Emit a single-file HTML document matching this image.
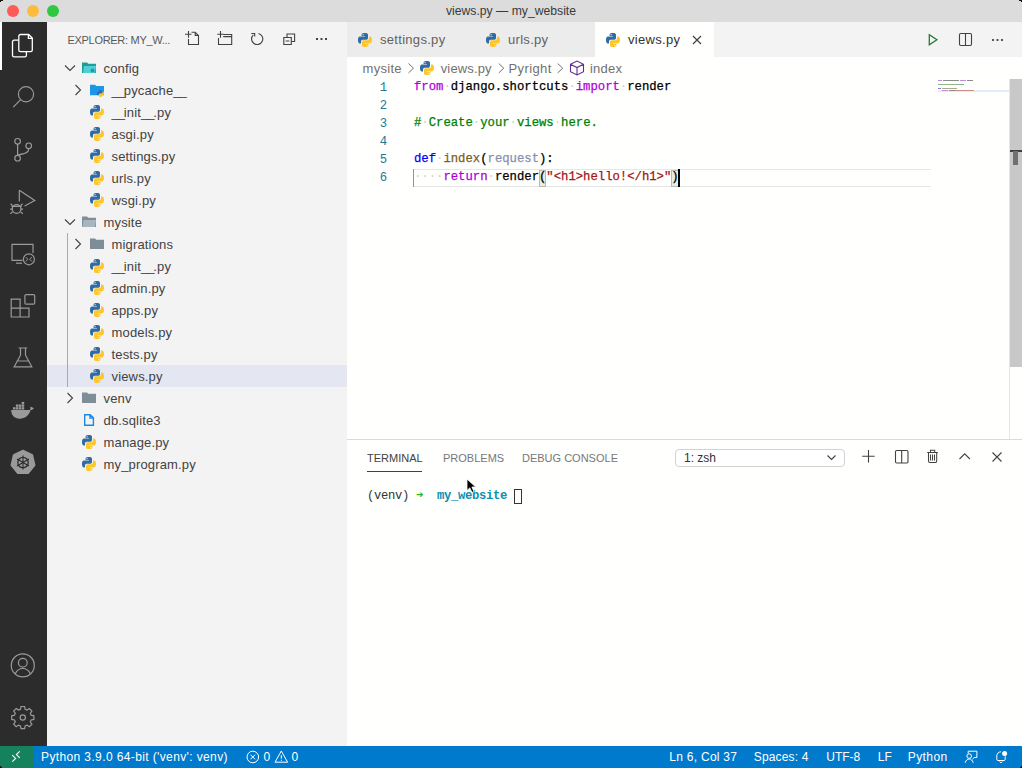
<!DOCTYPE html>
<html><head><meta charset="utf-8">
<style>
*{margin:0;padding:0;box-sizing:border-box}
html,body{width:1022px;height:768px;overflow:hidden;background:#fff;font-family:"Liberation Sans",sans-serif;}
.abs{position:absolute}
svg{position:absolute;overflow:visible}
#title{left:0;top:0;width:1022px;height:22px;background:#dcdcdc;}
#title .t{position:absolute;left:0;width:1022px;top:3px;text-align:center;font-size:12.2px;color:#3a3a3a;line-height:16px}
.dot{position:absolute;top:5px;width:12px;height:12px;border-radius:50%}
#act{left:0;top:22px;width:47px;height:724px;background:#2c2c2c}
#side{left:47px;top:22px;width:300px;height:724px;background:#f3f3f3}
#side .hdr{position:absolute;left:20.5px;top:12px;font-size:11px;line-height:13px;color:#5a5a5a;letter-spacing:-0.3px}
#editor{left:347px;top:22px;width:675px;height:417px;background:#fffffe}
#tabs{left:0;top:0;width:675px;height:35px;background:#f3f3f3}
.tab{position:absolute;top:0;height:35px;background:#ececec;font-size:13px;color:#626262}
.tab.active{background:#fffffe;color:#333}
.tab span{position:absolute;top:10px;line-height:16px;letter-spacing:0.3px}
#panel{left:347px;top:439px;width:675px;height:307px;background:#fffffe;border-top:1px solid #dadada}
#status{left:0;top:746px;width:1022px;height:22px;background:#007acc;color:#fff;font-size:12px}
#status span{position:absolute;top:3px;line-height:16px}
.row{position:absolute;left:0;width:300px;height:22px;font-size:13px;color:#424242}
.row.sel{background:#e4e6f1}
.row .n{position:absolute;top:4px;line-height:16px;letter-spacing:0.16px}
.u{letter-spacing:-1.1px}
.code{position:absolute;left:67px;font-family:"Liberation Mono",monospace;font-size:12.25px;line-height:18px;height:18px;white-space:pre;color:#000;-webkit-text-stroke:0.25px}
.ln{position:absolute;left:0;width:40px;font-family:"Liberation Mono",monospace;font-size:12.25px;line-height:18px;color:#237893;text-align:right}
.bc{position:absolute;top:3px;line-height:16px;font-size:13px;color:#717171}
.ws{color:#cfcfcf;-webkit-text-stroke:0}
.kw{color:#af00db}.dfn{color:#0000ff}.cm{color:#008000}.st{color:#a31515}.fn{color:#795e26}.pr{color:#8a8fb0}
.ptab{position:absolute;top:12px;font-size:11px;line-height:13px;color:#777}
.term{position:absolute;font-family:"Liberation Mono",monospace;font-size:12.2px;letter-spacing:-0.32px;line-height:16px;white-space:pre;color:#333}
</style></head><body>
<svg width="0" height="0" style="position:absolute">
<defs>
 <symbol id="py" viewBox="0 0 16 16">
  <path fill="#2f6ca6" d="M7.9 1C4.4 1 4.6 2.5 4.6 2.5v1.6H8v.5H3.2S1 4.3 1 7.9s1.9 3.5 1.9 3.5H4V9.7s-.1-1.9 1.9-1.9h3.3s1.8 0 1.8-1.8V2.8S11.3 1 7.9 1zM6.1 2.1a.6.6 0 1 1 0 1.2.6.6 0 0 1 0-1.2z"/>
  <path fill="#fcc62c" d="M8.1 15c3.5 0 3.3-1.5 3.3-1.5v-1.6H8v-.5h4.8s2.2.3 2.2-3.3-1.9-3.5-1.9-3.5H12v1.7s.1 1.9-1.9 1.9H6.8S5 8.2 5 10v3.2S4.7 15 8.1 15zm1.8-1.1a.6.6 0 1 1 0-1.2.6.6 0 0 1 0 1.2z"/>
 </symbol>
 <symbol id="i-py" viewBox="0 0 16 16"><use href="#py"/></symbol>
 <symbol id="chd" viewBox="0 0 16 16"><path d="M3 5.5l5 5 5-5" fill="none" stroke="#424242" stroke-width="1.1"/></symbol>
 <symbol id="chr" viewBox="0 0 16 16"><path d="M5.5 3l5 5-5 5" fill="none" stroke="#424242" stroke-width="1.1"/></symbol>
 <symbol id="i-cfgopen" viewBox="0 0 16 16">
  <path fill="#1f9e98" d="M1 2.5h5l1.3 1.3H15V13H1z"/>
  <path fill="#4fd0d6" d="M3 6h12l-1 7H2z"/>
  <circle cx="11.5" cy="10.5" r="2" fill="#1f9e98"/>
 </symbol>
 <symbol id="i-pycache" viewBox="0 0 16 16">
  <path fill="#1e96e8" d="M1 2.7h5l1.3 1.3H15v9.2H1z"/>
  <g transform="translate(7.5 7.5) scale(.5)"><use href="#py" width="16" height="16"/></g>
 </symbol>
 <symbol id="i-open" viewBox="0 0 16 16">
  <path fill="#7d8e98" d="M1 2.5h5l1.3 1.3H15V13H1z"/>
  <path fill="#a7b6be" d="M2.5 6h12.5l-1 7H1.5z"/>
 </symbol>
 <symbol id="i-closed" viewBox="0 0 16 16">
  <path fill="#7d8e98" d="M1 2.5h5l1.3 1.3H15V13H1z"/>
 </symbol>
 <symbol id="i-file" viewBox="0 0 16 16">
  <path fill="none" stroke="#1e88e5" stroke-width="1.4" d="M3.7 2.7h5.5l3.2 3.2v7.4H3.7z M9 2.7v3.4h3.4"/>
 </symbol>
</defs>
</svg>
<!-- TITLE BAR -->
<div id="title" class="abs">
  <div class="dot" style="left:7px;background:#fd5b56"></div>
  <div class="dot" style="left:27px;background:#fdbb3e"></div>
  <div class="dot" style="left:47px;background:#2ec842"></div>
  <div class="t">views.py — my_website</div>
</div>
<!-- ACTIVITY BAR -->
<div id="act" class="abs">
  <div class="abs" style="left:0;top:0;width:1.5px;height:48px;background:#fff"></div>
  <svg style="left:0;top:0" width="47" height="724" fill="none" stroke="#9a9a9a" stroke-width="1.2">
    <!-- explorer -->
    <g stroke="#fff" stroke-width="1.3">
      <path d="M18.5 18.2h-4.4a1.6 1.6 0 0 0-1.6 1.6v13.4a1.6 1.6 0 0 0 1.6 1.6h10.7a1.6 1.6 0 0 0 1.6-1.6v-4"/>
      <path d="M20.5 12.5h8.2l3.6 3.6v11.8a1.7 1.7 0 0 1-1.7 1.7h-10.1a1.7 1.7 0 0 1-1.7-1.7V14.2a1.7 1.7 0 0 1 1.7-1.7z M28.4 12.7v3.6h3.6"/>
    </g>
    <!-- search -->
    <circle cx="26" cy="72.3" r="7.6"/>
    <path d="M20.6 77.7l-7.3 7.5"/>
    <!-- scm -->
    <circle cx="17.6" cy="119.3" r="2.8"/>
    <circle cx="17.6" cy="136.2" r="2.8"/>
    <circle cx="28.7" cy="123.8" r="2.8"/>
    <path d="M17.6 122.1v11.3 M28.7 126.6c0 3.5-2 4.7-5.5 5.2-3 .4-5.2 1.2-5.6 1.6"/>
    <!-- debug -->
    <path d="M19.3 168.2v11.3 M19.3 168.2L34.8 178.4 24.6 184.1"/>
    <circle cx="16.6" cy="187" r="4.3"/>
    <path d="M11.5 184.4h10.2 M12.6 183.6l-2-1.8 M20.6 183.6l2-1.8 M12.4 190l-2 1.8 M20.8 190l2 1.8 M12.3 187.2h-2.2 M20.9 187.2h2.2"/>
    <!-- remote -->
    <path d="M22.5 238.3h-10.5v-15.9h21v8.6"/>
    <path d="M16 241.2h6"/>
    <circle cx="28.9" cy="237.3" r="5.5"/>
    <path d="M25.8 235.2l2 2.1-2 2.1 M31.8 235.2l-2 2.1 2 2.1" stroke-width="1"/>
    <!-- extensions -->
    <path d="M11.2 277.2h8.9v8.9h8.9V295H11.2z M11.2 286.1h8.9V295"/>
    <rect x="24.9" y="272.6" width="9.8" height="9.6" rx="1.2"/>
    <!-- testing -->
    <path d="M18.6 326h8.7 M20.5 326v7.2l-6.3 11.6h17.6l-6.3-11.6V326 M16.6 339h12.8"/>
    <!-- docker -->
    <g fill="#9a9a9a" stroke="none">
      <path d="M11.2 388h18.9c.4-1 .5-2.2.3-3.3 1.2.2 2.4.9 3.5 1.7-.8.9-1.9 1.5-3.3 1.6-1.6 5.5-5.8 8.7-10.8 8.7-5.4 0-8.6-3.5-8.6-8.7z"/>
      <rect x="13" y="385.2" width="2.5" height="2.3"/><rect x="15.9" y="385.2" width="2.5" height="2.3"/><rect x="18.8" y="385.2" width="2.5" height="2.3"/><rect x="21.7" y="385.2" width="2.5" height="2.3"/>
      <rect x="15.9" y="382.5" width="2.5" height="2.3"/><rect x="18.8" y="382.5" width="2.5" height="2.3"/><rect x="21.7" y="382.5" width="2.5" height="2.3"/>
      <rect x="21.7" y="379.9" width="2.5" height="2.3"/>
    </g>
    <!-- kubernetes -->
    <path fill="#9a9a9a" stroke="#9a9a9a" stroke-width="1.5" stroke-linejoin="round" d="M23.0 428.5 L32.4 433.0 L34.7 443.2 L28.2 451.3 L17.8 451.3 L11.3 443.2 L13.6 433.0z"/>
    <circle cx="23" cy="440.5" r="5.2" stroke="#2c2c2c" stroke-width="1.3"/>
    <path d="M23 433.5v14 M17 437l12 7 M29 437l-12 7" stroke="#2c2c2c" stroke-width="1.1"/>
    <!-- account -->
    <circle cx="22.8" cy="643.4" r="11.5"/>
    <circle cx="22.8" cy="640.8" r="4.4"/>
    <path d="M15.3 651.7c1.5-3.3 4.2-5.2 7.5-5.2s6 1.9 7.5 5.2"/>
    <!-- gear -->
    <circle cx="22.8" cy="695.5" r="2.6"/>
    <path d="M21 684.5h3.6l.6 2.8 1.8.8 2.4-1.6 2.5 2.5-1.6 2.4.8 1.8 2.8.6v3.6l-2.8.6-.8 1.8 1.6 2.4-2.5 2.5-2.4-1.6-1.8.8-.6 2.8H21l-.6-2.8-1.8-.8-2.4 1.6-2.5-2.5 1.6-2.4-.8-1.8-2.8-.6v-3.6l2.8-.6.8-1.8-1.6-2.4 2.5-2.5 2.4 1.6 1.8-.8z"/>
  </svg>
</div>
<!-- SIDEBAR -->
<div id="side" class="abs">
  <div class="hdr">EXPLORER: MY_W...</div>
  <svg style="left:0;top:0" width="300" height="35" fill="none" stroke="#424242" stroke-width="1.1">
    <!-- new file -->
    <path d="M141.5 17v5.5h10v-9.1l-3.3-3.2h-3.7 M148.2 10.2v3.2h3.3 M138 12.2h6.5 M141.5 9v6.7"/>
    <!-- new folder -->
    <path d="M171.5 16v6.5h13.2v-10h-8 M176.2 14.6h8.5 M170.3 12.2h6.4 M173.5 9v6.7"/>
    <!-- refresh -->
    <path d="M211.5 11.5A5.6 5.6 0 1 1 206.3 12.9 M204.3 11.5h3.4v3"/>
    <!-- collapse -->
    <path d="M236.8 15.5h7.5v7H236.8z M240 15.5v-3.5h7.6v7.5h-3.3 M238.6 19h3.8"/>
  </svg>
  <div class="abs" style="left:268.5px;top:16px;width:2px;height:2px;background:#424242;box-shadow:4.5px 0 #424242,9px 0 #424242"></div>
<div class="row" style="top:35px"><svg style="left:15px;top:3px" width="16" height="16"><use href="#chd"/></svg><svg style="left:34px;top:3px" width="16" height="16"><use href="#i-cfgopen"/></svg><span class="n" style="left:56.5px">config</span></div>
<div class="row" style="top:57px"><svg style="left:23px;top:3px" width="16" height="16"><use href="#chr"/></svg><svg style="left:42px;top:3px" width="16" height="16"><use href="#i-pycache"/></svg><span class="n" style="left:64.5px"><span class="u">__</span>pycache<span class="u">__</span></span></div>
<div class="row" style="top:79px"><svg style="left:42px;top:3px" width="16" height="16"><use href="#i-py"/></svg><span class="n" style="left:64.5px"><span class="u">__</span>init<span class="u">__</span>.py</span></div>
<div class="row" style="top:101px"><svg style="left:42px;top:3px" width="16" height="16"><use href="#i-py"/></svg><span class="n" style="left:64.5px">asgi.py</span></div>
<div class="row" style="top:123px"><svg style="left:42px;top:3px" width="16" height="16"><use href="#i-py"/></svg><span class="n" style="left:64.5px">settings.py</span></div>
<div class="row" style="top:145px"><svg style="left:42px;top:3px" width="16" height="16"><use href="#i-py"/></svg><span class="n" style="left:64.5px">urls.py</span></div>
<div class="row" style="top:167px"><svg style="left:42px;top:3px" width="16" height="16"><use href="#i-py"/></svg><span class="n" style="left:64.5px">wsgi.py</span></div>
<div class="row" style="top:189px"><svg style="left:15px;top:3px" width="16" height="16"><use href="#chd"/></svg><svg style="left:34px;top:3px" width="16" height="16"><use href="#i-open"/></svg><span class="n" style="left:56.5px">mysite</span></div>
<div class="row" style="top:211px"><svg style="left:23px;top:3px" width="16" height="16"><use href="#chr"/></svg><svg style="left:42px;top:3px" width="16" height="16"><use href="#i-closed"/></svg><span class="n" style="left:64.5px">migrations</span></div>
<div class="row" style="top:233px"><svg style="left:42px;top:3px" width="16" height="16"><use href="#i-py"/></svg><span class="n" style="left:64.5px"><span class="u">__</span>init<span class="u">__</span>.py</span></div>
<div class="row" style="top:255px"><svg style="left:42px;top:3px" width="16" height="16"><use href="#i-py"/></svg><span class="n" style="left:64.5px">admin.py</span></div>
<div class="row" style="top:277px"><svg style="left:42px;top:3px" width="16" height="16"><use href="#i-py"/></svg><span class="n" style="left:64.5px">apps.py</span></div>
<div class="row" style="top:299px"><svg style="left:42px;top:3px" width="16" height="16"><use href="#i-py"/></svg><span class="n" style="left:64.5px">models.py</span></div>
<div class="row" style="top:321px"><svg style="left:42px;top:3px" width="16" height="16"><use href="#i-py"/></svg><span class="n" style="left:64.5px">tests.py</span></div>
<div class="row sel" style="top:343px"><svg style="left:42px;top:3px" width="16" height="16"><use href="#i-py"/></svg><span class="n" style="left:64.5px">views.py</span></div>
<div class="row" style="top:365px"><svg style="left:15px;top:3px" width="16" height="16"><use href="#chr"/></svg><svg style="left:34px;top:3px" width="16" height="16"><use href="#i-closed"/></svg><span class="n" style="left:56.5px">venv</span></div>
<div class="row" style="top:387px"><svg style="left:34px;top:3px" width="16" height="16"><use href="#i-file"/></svg><span class="n" style="left:56.5px">db.sqlite3</span></div>
<div class="row" style="top:409px"><svg style="left:34px;top:3px" width="16" height="16"><use href="#i-py"/></svg><span class="n" style="left:56.5px">manage.py</span></div>
<div class="row" style="top:431px"><svg style="left:34px;top:3px" width="16" height="16"><use href="#i-py"/></svg><span class="n" style="left:56.5px">my_program.py</span></div>
  <div class="abs" style="left:20px;top:211px;width:1px;height:154px;background:#a9a9a9"></div>
</div>
<!-- EDITOR -->
<div id="editor" class="abs">
  <div id="tabs" class="abs">
    <div class="tab" style="left:0;width:128px"><svg style="left:10px;top:9.5px" width="16" height="16"><use href="#py"/></svg><span style="left:33px">settings.py</span></div>
    <div class="tab" style="left:128px;width:120px"><svg style="left:10px;top:9.5px" width="16" height="16"><use href="#py"/></svg><span style="left:33px">urls.py</span></div>
    <div class="tab active" style="left:248px;width:119px"><svg style="left:10px;top:9.5px" width="16" height="16"><use href="#py"/></svg><span style="left:33px">views.py</span>
      <svg style="left:97px;top:13px" width="10" height="10" stroke="#424242" stroke-width="1.2"><path d="M1 1l8 8M9 1l-8 8"/></svg>
    </div>
    <svg style="left:0;top:0" width="675" height="35" fill="none" stroke="#424242" stroke-width="1.1">
      <path d="M582.3 12.8v10l7.6-5z" stroke="#247a2e" stroke-width="1.3"/>
      <rect x="612.5" y="11.5" width="12" height="12" rx="1.2"/><path d="M618.5 11.5v12"/>
    </svg>
    <div class="abs" style="left:644.5px;top:17px;width:2px;height:2px;background:#555;box-shadow:4.5px 0 #555,9px 0 #555"></div>
  </div>
  <!-- breadcrumbs -->
  <div class="bc" style="left:15.5px;top:39px;letter-spacing:0.3px">mysite</div>
  <svg style="left:0;top:35px" width="675" height="22" fill="none" stroke="#717171" stroke-width="1">
    <path d="M61.5 6.5l5 4.7-5 4.7 M151.8 6.5l5 4.7-5 4.7 M210.7 6.5l5 4.7-5 4.7"/>
    <path d="M223.5 7.3l6.5-3.3 6.5 3.3v7.4l-6.5 3.3-6.5-3.3z M223.5 7.3l6.5 3.3 6.5-3.3 M230 10.6v7.4" stroke="#652d90" stroke-width="1.1"/>
  </svg>
  <svg style="left:72px;top:38px" width="16" height="16"><use href="#py"/></svg>
  <div class="bc" style="left:93.7px;top:39px;letter-spacing:0.15px">views.py</div>
  <div class="bc" style="left:161.5px;top:39px;letter-spacing:0.4px">Pyright</div>
  <div class="bc" style="left:243px;top:39px;letter-spacing:0.2px">index</div>
  <!-- line numbers -->
  <div class="ln" style="top:57px">1</div>
  <div class="ln" style="top:75px">2</div>
  <div class="ln" style="top:93px">3</div>
  <div class="ln" style="top:111px">4</div>
  <div class="ln" style="top:129px">5</div>
  <div class="ln" style="top:147px">6</div>
  <!-- current line -->
  <div class="abs" style="left:66px;top:147px;width:518px;height:18px;border-top:1px solid #e6e6e6;border-bottom:1px solid #e6e6e6"></div>
  <div class="abs" style="left:66px;top:147px;width:1px;height:18px;background:#939393"></div>
  <div class="code" style="top:56px"><span class="kw">from</span><span class="ws">·</span>django.shortcuts<span class="ws">·</span><span class="kw">import</span><span class="ws">·</span>render</div>
  <div class="code" style="top:92px"><span class="cm">#<span class="ws">·</span>Create<span class="ws">·</span>your<span class="ws">·</span>views<span class="ws">·</span>here.</span></div>
  <div class="code" style="top:128px"><span class="dfn">def</span><span class="ws">·</span><span class="fn">index</span>(<span class="pr">request</span>):</div>
    <!-- bracket boxes & cursor -->
  <div class="abs" style="left:191.9px;top:148px;width:7.35px;height:17px;background:rgba(0,100,0,0.1);border:1px solid #b9b9b9"></div>
  <div class="abs" style="left:324.2px;top:148px;width:7.35px;height:17px;background:rgba(0,100,0,0.1);border:1px solid #b9b9b9"></div>
  <div class="abs" style="left:331px;top:147px;width:2px;height:18px;background:#000"></div>
  <!-- minimap -->
  <div class="abs" style="left:591px;top:57.5px;width:71px;height:14px;opacity:.8">
    <div class="abs" style="left:0;top:0;width:4px;height:1.5px;background:#b070d0"></div>
    <div class="abs" style="left:5px;top:0;width:16px;height:1.5px;background:#707070"></div>
    <div class="abs" style="left:22px;top:0;width:6px;height:1.5px;background:#b070d0"></div>
    <div class="abs" style="left:29px;top:0;width:6px;height:1.5px;background:#707070"></div>
    <div class="abs" style="left:0;top:4px;width:26px;height:1.5px;background:#70a870"></div>
    <div class="abs" style="left:0;top:10px;width:71px;height:2px;background:#dde9f6"></div>
    <div class="abs" style="left:0;top:8px;width:3px;height:1.5px;background:#6060e0"></div>
    <div class="abs" style="left:4px;top:8px;width:15px;height:1.5px;background:#a09070"></div>
    <div class="abs" style="left:4px;top:10px;width:6px;height:1.5px;background:#b070d0"></div>
    <div class="abs" style="left:11px;top:10px;width:7px;height:1.5px;background:#707070"></div>
    <div class="abs" style="left:18px;top:10px;width:18px;height:1.5px;background:#c07070"></div>
  </div>
  <!-- scrollbar -->
  <div class="abs" style="left:662px;top:57px;width:1px;height:360px;background:#e6e6e6"></div>
  <div class="abs" style="left:663px;top:57px;width:12px;height:288px;background:#c8c8c8"></div>
  <div class="abs" style="left:663px;top:128px;width:12px;height:2px;background:#404040"></div>
  <div class="abs" style="left:666px;top:129px;width:5px;height:14px;background:#707070"></div>
  <div class="code" style="top:146px"><span class="ws">····</span><span class="kw">return</span><span class="ws">·</span><span class="fn" style="color:#000">render</span>(<span class="st">"&lt;h1&gt;hello!&lt;/h1&gt;"</span>)</div>
</div>
<!-- PANEL -->
<div id="panel" class="abs">
  <div class="ptab" style="left:20px;color:#424242">TERMINAL</div>
  <div class="abs" style="left:20px;top:31px;width:55px;height:1px;background:#424242"></div>
  <div class="ptab" style="left:96px">PROBLEMS</div>
  <div class="ptab" style="left:175px">DEBUG CONSOLE</div>
  <div class="abs" style="left:328px;top:8.5px;width:170px;height:18.5px;border:1px solid #d2d2d2;border-radius:4px;background:#fff"></div>
  <div class="abs" style="left:337px;top:12px;font-size:12px;line-height:13px;color:#333">1: zsh</div>
  <svg style="left:0;top:-1px" width="675" height="40" fill="none" stroke="#424242" stroke-width="1.1">
    <path d="M480.5 16.5l4 4 4-4"/>
    <path d="M521.5 11v12.5 M515.2 17.2h12.5"/>
    <rect x="548.5" y="11.5" width="12.5" height="12.5" rx="1.2"/><path d="M554.7 11.5v12.5"/>
    <path d="M580.2 13.5h10.7 M581.5 13.5v8.6a1.4 1.4 0 0 0 1.4 1.4h5.4a1.4 1.4 0 0 0 1.4-1.4v-8.6 M583.5 13.5v-2.2h4.2v2.2 M583.5 15.5v6 M585.5 15.5v6 M587.5 15.5v6" stroke-width="1.05"/>
    <path d="M612.5 20l5.2-5.2 5.2 5.2"/>
    <path d="M645.5 13.5l9 9 M654.5 13.5l-9 9"/>
  </svg>
  <div class="term" style="left:20px;top:48px">(venv) <span style="color:#22b822">&#10140;</span>  <b style="color:#0e8fb0">my_website</b> </div>
  <div class="abs" style="left:167px;top:49px;width:7.5px;height:14.5px;border:1px solid #333"></div>
</div>
<!-- MOUSE -->
<svg style="left:466px;top:478px" width="12" height="16"><path d="M1 1v11.5l2.8-2.6 2.2 4.6 2-1-2.1-4.5h3.8z" fill="#000" stroke="#fff" stroke-width="0.8"/></svg>
<!-- STATUS -->
<div id="status" class="abs">
  <div class="abs" style="left:0;top:0;width:33px;height:22px;background:#16825d"></div>
  <svg style="left:0;top:0" width="33" height="22" fill="none" stroke="#fff" stroke-width="1.1">
    <path d="M12.3 9.1l3.3 3.3-3.3 3.3 M19.7 5.3l-3.3 3.3 3.3 3.3"/>
  </svg>
  <span style="left:41px;letter-spacing:0.38px">Python 3.9.0 64-bit ('venv': venv)</span>
  <svg style="left:0;top:0" width="1022" height="22" fill="none" stroke="#fff" stroke-width="1">
    <circle cx="252.8" cy="11" r="5.8"/>
    <path d="M250.5 8.7l4.6 4.6 M255.1 8.7l-4.6 4.6"/>
    <path d="M281.3 5l6.3 11.2H275z M281.3 9.2v3.5 M281.3 13.8v1"/>
    <path d="M968.2 7.6V5.2h8.7v6.3h-2.6l-1.9 1.7 M965.2 16.8c.6-2.4 2.2-3.8 4-3.8s3.4 1.4 4 3.8"/>
    <circle cx="969.2" cy="10.1" r="2.3"/>
    <path d="M996.8 10a4.2 4.2 0 0 1 4.2-4.2 M996.8 10v3.3c0 .8.5 1.2 1.2 1.2h6c.7 0 1.2-.4 1.2-1.2v-3 M999.6 15.6a1.5 1.5 0 0 0 2.8 0"/>
  </svg>
  <svg style="left:0;top:0" width="1022" height="22"><circle cx="1004.6" cy="7.4" r="2.5" fill="#fff"/></svg>
  <span style="left:263.5px">0</span>
  <span style="left:291.5px">0</span>
  <span style="left:669.3px;letter-spacing:0.27px">Ln 6, Col 37</span>
  <span style="left:753.8px;letter-spacing:0.15px">Spaces: 4</span>
  <span style="left:826.3px">UTF-8</span>
  <span style="left:877.8px">LF</span>
  <span style="left:907.8px;letter-spacing:0.4px">Python</span>
</div>
<!-- corners -->
<div class="abs" style="left:0;top:0;width:3px;height:1px;background:#111"></div><div class="abs" style="left:0;top:0;width:1px;height:2px;background:#111"></div>
<div class="abs" style="left:1019px;top:0;width:3px;height:1px;background:#111"></div><div class="abs" style="left:1021px;top:0;width:1px;height:2px;background:#111"></div>
<div class="abs" style="left:1020px;top:767px;width:2px;height:1px;background:#111"></div><div class="abs" style="left:1021px;top:766px;width:1px;height:2px;background:#111"></div>
<div class="abs" style="left:0;top:767px;width:2px;height:1px;background:#111"></div><div class="abs" style="left:0;top:766px;width:1px;height:2px;background:#111"></div>
</body></html>
